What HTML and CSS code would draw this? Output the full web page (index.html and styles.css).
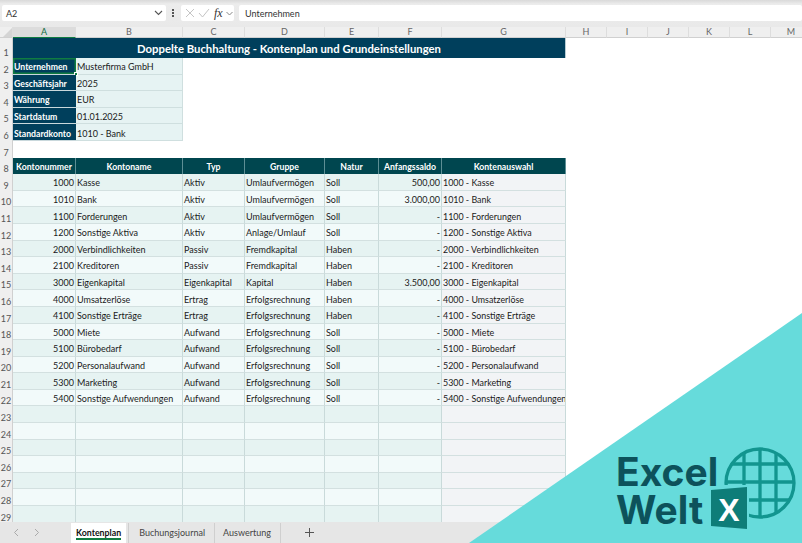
FILE: index.html
```html
<!DOCTYPE html>
<html lang="de">
<head>
    <meta charset="UTF-8">
    <meta name="viewport" content="width=device-width, initial-scale=1.0">
    <title>Doppelte Buchhaltung - Kontenplan</title>
    <link rel="stylesheet" href="styles.css">
</head>
<body>

    <div class="formula-bar">
        <div class="name-box">
            <span>A2</span>
            <svg width="9" height="6" viewBox="0 0 9 6"><path d="M1 1l3.500 3.500L8 1" fill="none" stroke="#555" stroke-width="1.100"/></svg>
        </div>
        <div class="dots"><i></i><i></i><i></i></div>
        <div class="fx-box">
            <svg width="10" height="10" viewBox="0 0 10 10"><path d="M1 1l8 8M9 1l-8 8" fill="none" stroke="#c4c4c4" stroke-width="1"/></svg>
            <svg width="12" height="10" viewBox="0 0 12 10"><path d="M1 5l3.500 4L11 1" fill="none" stroke="#c4c4c4" stroke-width="1"/></svg>
            <span class="fx">fx</span>
            <svg width="7" height="5" viewBox="0 0 7 5"><path d="M.5 1l3 3 3-3" fill="none" stroke="#888" stroke-width="1"/></svg>
        </div>
        <div class="formula-input">Unternehmen</div>
    </div>

    <table class="sheet">
        <colgroup>
            <col class="c-rownum"><col class="c-a"><col class="c-b"><col class="c-c"><col class="c-d"><col class="c-e"><col class="c-f"><col class="c-g">
            <col class="c-h"><col class="c-h"><col class="c-h"><col class="c-h"><col class="c-h"><col class="c-h">
        </colgroup>
        <tr class="letters">
            <th class="corner"><svg width="9" height="9" viewBox="0 0 9 9"><path d="M9 0v9H0z" fill="#d4d4d4"/></svg></th>
            <th class="active">A</th><th>B</th><th>C</th><th>D</th><th>E</th><th>F</th><th>G</th><th>H</th><th>I</th><th>J</th><th>K</th><th>L</th><th>M</th>
        </tr>
        <tr class="title-row"><th class="num">1</th><td colspan="7" class="title">Doppelte Buchhaltung - Kontenplan und Grundeinstellungen</td></tr>

        <tr><th class="num">2</th><td class="label selected">Unternehmen<i class="handle"></i></td><td class="value">Musterfirma GmbH</td></tr>
        <tr><th class="num">3</th><td class="label">Geschäftsjahr</td><td class="value">2025</td></tr>
        <tr><th class="num">4</th><td class="label">Währung</td><td class="value">EUR</td></tr>
        <tr><th class="num">5</th><td class="label">Startdatum</td><td class="value">01.01.2025</td></tr>
        <tr><th class="num">6</th><td class="label">Standardkonto</td><td class="value">1010 - Bank</td></tr>
        <tr><th class="num">7</th></tr>

        <tr class="head"><th class="num">8</th><td>Kontonummer</td><td>Kontoname</td><td>Typ</td><td>Gruppe</td><td>Natur</td><td>Anfangssaldo</td><td>Kontenauswahl</td></tr>

        <tr class="dark"><th class="num">9</th><td class="right">1000</td><td>Kasse</td><td>Aktiv</td><td>Umlaufvermögen</td><td>Soll</td><td class="right">500,00</td><td class="pick">1000 - Kasse</td></tr>
        <tr class="light"><th class="num">10</th><td class="right">1010</td><td>Bank</td><td>Aktiv</td><td>Umlaufvermögen</td><td>Soll</td><td class="right">3.000,00</td><td class="pick">1010 - Bank</td></tr>
        <tr class="dark"><th class="num">11</th><td class="right">1100</td><td>Forderungen</td><td>Aktiv</td><td>Umlaufvermögen</td><td>Soll</td><td class="right">-</td><td class="pick">1100 - Forderungen</td></tr>
        <tr class="light"><th class="num">12</th><td class="right">1200</td><td>Sonstige Aktiva</td><td>Aktiv</td><td>Anlage/Umlauf</td><td>Soll</td><td class="right">-</td><td class="pick">1200 - Sonstige Aktiva</td></tr>
        <tr class="dark"><th class="num">13</th><td class="right">2000</td><td>Verbindlichkeiten</td><td>Passiv</td><td>Fremdkapital</td><td>Haben</td><td class="right">-</td><td class="pick">2000 - Verbindlichkeiten</td></tr>
        <tr class="light"><th class="num">14</th><td class="right">2100</td><td>Kreditoren</td><td>Passiv</td><td>Fremdkapital</td><td>Haben</td><td class="right">-</td><td class="pick">2100 - Kreditoren</td></tr>
        <tr class="dark"><th class="num">15</th><td class="right">3000</td><td>Eigenkapital</td><td>Eigenkapital</td><td>Kapital</td><td>Haben</td><td class="right">3.500,00</td><td class="pick">3000 - Eigenkapital</td></tr>
        <tr class="light"><th class="num">16</th><td class="right">4000</td><td>Umsatzerlöse</td><td>Ertrag</td><td>Erfolgsrechnung</td><td>Haben</td><td class="right">-</td><td class="pick">4000 - Umsatzerlöse</td></tr>
        <tr class="dark"><th class="num">17</th><td class="right">4100</td><td>Sonstige Erträge</td><td>Ertrag</td><td>Erfolgsrechnung</td><td>Haben</td><td class="right">-</td><td class="pick">4100 - Sonstige Erträge</td></tr>
        <tr class="light"><th class="num">18</th><td class="right">5000</td><td>Miete</td><td>Aufwand</td><td>Erfolgsrechnung</td><td>Soll</td><td class="right">-</td><td class="pick">5000 - Miete</td></tr>
        <tr class="dark"><th class="num">19</th><td class="right">5100</td><td>Bürobedarf</td><td>Aufwand</td><td>Erfolgsrechnung</td><td>Soll</td><td class="right">-</td><td class="pick">5100 - Bürobedarf</td></tr>
        <tr class="light"><th class="num">20</th><td class="right">5200</td><td>Personalaufwand</td><td>Aufwand</td><td>Erfolgsrechnung</td><td>Soll</td><td class="right">-</td><td class="pick">5200 - Personalaufwand</td></tr>
        <tr class="dark"><th class="num">21</th><td class="right">5300</td><td>Marketing</td><td>Aufwand</td><td>Erfolgsrechnung</td><td>Soll</td><td class="right">-</td><td class="pick">5300 - Marketing</td></tr>
        <tr class="light"><th class="num">22</th><td class="right">5400</td><td>Sonstige Aufwendungen</td><td>Aufwand</td><td>Erfolgsrechnung</td><td>Soll</td><td class="right">-</td><td class="pick">5400 - Sonstige Aufwendungen</td></tr>

        <tr class="dark"><th class="num">23</th><td></td><td></td><td></td><td></td><td></td><td></td><td class="pick"></td></tr>
        <tr class="light"><th class="num">24</th><td></td><td></td><td></td><td></td><td></td><td></td><td class="pick"></td></tr>
        <tr class="dark"><th class="num">25</th><td></td><td></td><td></td><td></td><td></td><td></td><td class="pick"></td></tr>
        <tr class="light"><th class="num">26</th><td></td><td></td><td></td><td></td><td></td><td></td><td class="pick"></td></tr>
        <tr class="dark"><th class="num">27</th><td></td><td></td><td></td><td></td><td></td><td></td><td class="pick"></td></tr>
        <tr class="light"><th class="num">28</th><td></td><td></td><td></td><td></td><td></td><td></td><td class="pick"></td></tr>
        <tr class="dark"><th class="num">29</th><td></td><td></td><td></td><td></td><td></td><td></td><td class="pick"></td></tr>
    </table>

    <div class="tabs">
        <svg class="nav" width="6" height="9" viewBox="0 0 6 9"><path d="M5 1L1.500 4.500 5 8" fill="none" stroke="#aaa" stroke-width="1"/></svg>
        <svg class="nav" width="6" height="9" viewBox="0 0 6 9"><path d="M1 1l3.500 3.500L1 8" fill="none" stroke="#aaa" stroke-width="1"/></svg>
        <div class="tab current">Kontenplan</div>
        <div class="tab">Buchungsjournal</div>
        <div class="tab">Auswertung</div>
        <svg class="plus" width="9" height="9" viewBox="0 0 9 9"><path d="M4.500 0v9M0 4.500h9" stroke="#555" stroke-width="1"/></svg>
    </div>

    <!-- logo corner lies over the sheet -->
    <svg class="brand" width="802" height="543" viewBox="0 0 802 543">
        <defs>
            <clipPath id="globeClip"><circle cx="760" cy="483" r="35"/></clipPath>
        </defs>
        <polygon points="802,313 802,543 469,543" fill="#66dbdb"/>
        <g fill="none" stroke="#12958f">
            <circle cx="760" cy="483" r="34" stroke-width="3.300"/>
            <g clip-path="url(#globeClip)" stroke-width="3.300">
                <path d="M744 448v70M760 448v70M776 448v70M725 464h70M725 482h70M725 500h70"/>
            </g>
        </g>
        <polygon points="720,485 749,485 749,530 720,530" fill="#66dbdb"/>
        <polygon points="711,490 747,487 747,529 711,526" fill="#0e7d78"/>
        <text class="brand-x" x="729" y="521" text-anchor="middle">X</text>
        <text class="brand-name" x="616" y="486">Excel</text>
        <text class="brand-name" x="616" y="524">Welt</text>
    </svg>

</body>
</html>
```
FILE: styles.css
```css
html, body {
    margin: 0;
    height: 543px;
    overflow: hidden;
}
body {
    position: relative;
    font-family: Lato, "Liberation Sans", sans-serif;
    font-size: 9px;
    color: #1a1a1a;
    background: #fff;
}

/* formula bar */
.formula-bar {
    display: flex;
    align-items: center;
    gap: 5px;
    box-sizing: border-box;
    height: 27px;
    padding: 5px 0 6px 2px;
    background: linear-gradient(#d9d9d9, #ececec 4px, #e9e9e9);
}
.name-box, .fx-box, .formula-input {
    display: flex;
    align-items: center;
    height: 16px;
    background: #fff;
    border-radius: 2px;
}
.name-box {
    justify-content: space-between;
    width: 164px;
    padding: 0 3px 0 4px;
    box-sizing: border-box;
    color: #333;
}
.dots {
    display: flex;
    flex-direction: column;
    gap: 1px;
    width: 5px;
    margin-left: -1px;
    align-items: center;
}
.dots i {
    width: 2px;
    height: 2px;
    background: #555;
}
.fx-box {
    width: 53px;
    box-sizing: border-box;
    padding: 0 1px 0 4px;
    margin-left: 1px;
    justify-content: space-between;
}
.fx {
    font-family: "Liberation Serif", serif;
    font-style: italic;
    font-size: 12px;
    color: #333;
}
.formula-input {
    flex: 1;
    padding-left: 6px;
    color: #333;
}

/* sheet */
.sheet {
    table-layout: fixed;
    border-collapse: separate;
    border-spacing: 0;
    width: 812px;
}
.c-rownum { width: 13px; }
.c-a { width: 63px; }
.c-b { width: 107px; }
.c-c { width: 62px; }
.c-d { width: 80px; }
.c-e { width: 54px; }
.c-f { width: 63px; }
.c-g { width: 124px; }
.c-h { width: 41px; }

.sheet tr { height: 16.6px; }
.sheet td {
    padding: 2px 1px 0;
    white-space: nowrap;
    overflow: hidden;
    box-sizing: border-box;
    line-height: 13px;
}

.letters { height: 11px !important; }
.letters th {
    padding: 0;
    height: 11px;
    line-height: 10px;
    font-size: 9px;
    font-weight: 400;
    color: #666;
    background: #efefef;
    border-bottom: 1px solid #d0d0d0;
    border-right: 1px solid #ddd;
    box-sizing: border-box;
}
.letters th.active {
    background: #dcdcdc;
    color: #0f6b3e;
    border-bottom: 1px solid #107c41;
}
.letters .corner { text-align: right; line-height: 0; }
.num {
    padding: 0;
    font-size: 9px;
    font-weight: 400;
    color: #555;
    background: #efefef;
    border-right: 1px solid #d0d0d0;
    vertical-align: bottom;
    line-height: 11px;
    text-align: center;
    overflow: visible;
}

.title-row { height: 20px !important; }
.sheet .title {
    padding-top: 0;
    text-align: center;
    font-size: 11.3px;
    font-weight: 700;
    color: #fff;
    background: #003f5c;
    border-right: 1px solid #b8cdd4;
}
.label {
    position: relative;
    font-size: 8.7px;
    font-weight: 700;
    color: #fff;
    background: #003f5c;
    border-bottom: 1px solid #c9d8dc;
}
.sheet .label.selected {
    box-shadow: inset 0 0 0 1.500px #107c41;
    overflow: visible;
}
.handle {
    position: absolute;
    right: -2px;
    bottom: -2px;
    width: 4px;
    height: 4px;
    background: #107c41;
    border: 1px solid #fff;
    box-sizing: border-box;
}
.value {
    background: #e6f3f3;
    border-bottom: 1px solid #cfdfdf;
    border-right: 1px solid #cfdfdf;
}

.head td {
    text-align: center;
    font-size: 8.7px;
    font-weight: 700;
    color: #fff;
    background: #00464f;
    border-right: 1px solid #5d8f95;
}
.dark td, .light td {
    border-right: 1px solid #c9dada;
    border-bottom: 1px solid #d3e0e0;
}
.dark td { background: #e6f3f2; }
.light td { background: #f2fafa; }
.sheet .pick {
    font-size: 8.9px;
    background: #f2f4f6;
}
.right { text-align: right; }

/* sheet tabs */
.tabs {
    position: absolute;
    left: 0;
    right: 0;
    bottom: 0;
    display: flex;
    align-items: center;
    height: 21px;
    padding-left: 13px;
    background: #e6e6e6;
    color: #444;
}
.nav { margin-right: 15px; }
.nav + .nav { margin-right: 31px; }
.tab {
    padding: 0 9px 0 8px;
    height: 20px;
    line-height: 20px;
    border-right: 1px solid #cfcfcf;
    box-sizing: border-box;
}
.tab.current {
    position: relative;
    padding: 0 5px;
    margin-right: 2px;
    background: #fff;
    color: #111;
    font-size: 8.8px;
    font-weight: 700;
    border-right: 0;
}
.tab.current::after {
    content: "";
    position: absolute;
    left: 5px;
    right: 5px;
    bottom: 3px;
    height: 2px;
    background: #107c41;
}
.current + .tab {
    padding-left: 10px;
    border-left: 1px solid #cfcfcf;
}
.plus { margin-left: 24px; }

/* logo */
.brand {
    position: absolute;
    left: 0;
    top: 0;
}
.brand-name {
    font-family: Inter, "Liberation Sans", sans-serif;
    font-size: 39px;
    font-weight: 700;
    fill: #0d525b;
}
.brand-x {
    font-family: "Liberation Sans", sans-serif;
    font-size: 32px;
    font-weight: 700;
    fill: #fff;
}
```
